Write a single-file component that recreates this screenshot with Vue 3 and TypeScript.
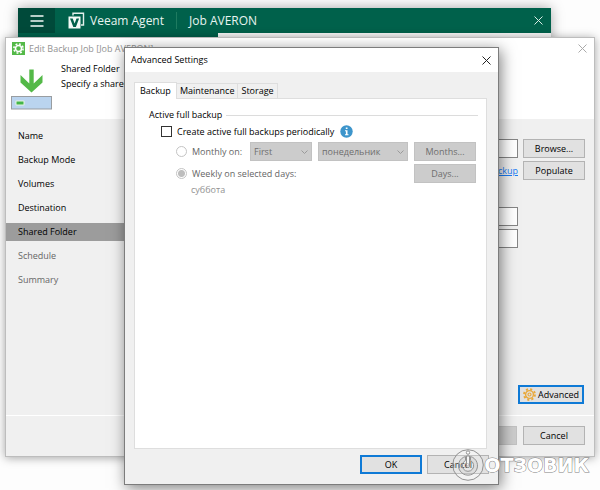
<script setup lang="ts">
import { ref } from 'vue'

interface Step {
  name: string
  pending?: boolean
}

const steps: Step[] = [
  { name: 'Name' },
  { name: 'Backup Mode' },
  { name: 'Volumes' },
  { name: 'Destination' },
  { name: 'Shared Folder' },
  { name: 'Schedule', pending: true },
  { name: 'Summary', pending: true },
]
const currentStep = ref('Shared Folder')

const tabs: string[] = ['Backup', 'Maintenance', 'Storage']
const activeTab = ref('Backup')

const periodic = ref(false)
const mode = ref<'monthly' | 'weekly'>('weekly')
</script>

<template>
  <div class="desktop">
    <section class="window agent" aria-label="Veeam Agent">
      <header class="agent-bar">
        <button class="menu" aria-label="Menu">
          <svg width="14" height="12" viewBox="0 0 14 12"><path d="M0.5 1h13M0.5 6h13M0.5 11h13" stroke="#f4faf8" stroke-width="1.4" /></svg>
        </button>
        <svg class="logo" width="17" height="17" viewBox="0 0 17 17">
          <path d="M5 3.5V1.200H15.500V13H13" fill="none" stroke="#e4f0ec" stroke-width="1.4" />
          <path d="M0.5 4.500H12.5V16.500H0.5z" fill="#f3faf7" />
          <path d="M2 6.600h2.700l1.900 5 1.900-5h2.600L7.900 15H5.300z" fill="#00614b" />
        </svg>
        <span class="brand">Veeam Agent</span>
        <span class="divider"></span>
        <span class="job">Job AVERON</span>
        <button class="close light" aria-label="Close">
          <svg width="9" height="9" viewBox="0 0 9 9"><path d="M0.5 0.5l8 8M8.5 0.5l-8 8" stroke="currentColor" /></svg>
        </button>
      </header>
      <div class="agent-body"></div>
    </section>

    <section class="window wizard" aria-label="Edit Backup Job">
      <header class="wizard-head">
        <div class="wizard-title">
          <svg width="13" height="13" viewBox="0 0 13 13">
            <rect width="13" height="13" fill="#54b948" />
            <circle cx="6.5" cy="6.5" r="4.6" fill="none" stroke="#fff" stroke-width="1.6" stroke-dasharray="1.9 1.71" />
            <circle cx="6.5" cy="6.5" r="3" fill="none" stroke="#fff" stroke-width="1.5" />
          </svg>
          <span>Edit Backup Job [Job AVERON]</span>
          <button class="close dim" aria-label="Close">
            <svg width="9" height="9" viewBox="0 0 9 9"><path d="M0.5 0.5l8 8M8.5 0.5l-8 8" stroke="currentColor" /></svg>
          </button>
        </div>
        <div class="intro">
          <svg width="41" height="41" viewBox="0 0 41 41">
            <path d="M18.300 0.500h4.400V14.500l8.800-8.500v7.500L20.500 23.500 9.500 13.500V6l8.800 8.500z" fill="#54b948" />
            <rect x="0.5" y="27.500" width="40" height="12.500" fill="#bad4ef" stroke="#999da1" />
            <rect x="4.500" y="31.500" width="9" height="5" rx="1" fill="#e8f5e4" />
            <rect x="5.500" y="32.500" width="7" height="3" fill="#43b649" />
          </svg>
          <div class="intro-text">
            <h1>Shared Folder</h1>
            <p>Specify a shared</p>
          </div>
        </div>
      </header>

      <div class="wizard-body">
        <nav class="steps">
          <a
            v-for="step in steps"
            :key="step.name"
            href="#"
            :class="{ current: step.name === currentStep, pending: step.pending }"
            @click.prevent="currentStep = step.name"
          >{{ step.name }}</a>
        </nav>
        <form class="folder" @submit.prevent>
          <div class="line">
            <input type="text" aria-label="Shared folder" />
            <button type="button" class="btn">Browse...</button>
          </div>
          <div class="line">
            <a class="link" href="#" @click.prevent>backup</a>
            <button type="button" class="btn">Populate</button>
          </div>
          <div class="credentials">
            <input type="text" aria-label="Username" />
            <input type="password" aria-label="Password" />
          </div>
          <button type="button" class="btn focus advanced">
            <svg width="13" height="13" viewBox="0 0 13 13" fill="none" stroke="#e9a93c">
              <circle cx="6.5" cy="6.5" r="5.400" stroke-width="2" stroke-dasharray="2.100 2.141" />
              <circle cx="6.5" cy="6.5" r="3.900" stroke-width="1.400" />
              <circle cx="6.5" cy="6.5" r="1.500" stroke-width="1.200" />
            </svg>
            Advanced
          </button>
        </form>
      </div>

      <footer class="wizard-foot">
        <button class="btn off" disabled aria-label="Finish"></button>
        <button class="btn">Cancel</button>
      </footer>
    </section>

    <section class="window dialog" role="dialog" aria-label="Advanced Settings">
      <header class="dialog-title">
        <span>Advanced Settings</span>
        <button class="close" aria-label="Close">
          <svg width="9" height="9" viewBox="0 0 9 9"><path d="M0.5 0.5l8 8M8.5 0.5l-8 8" stroke="currentColor" /></svg>
        </button>
      </header>

      <div class="tabs" role="tablist">
        <button
          v-for="tab in tabs"
          :key="tab"
          role="tab"
          :aria-selected="tab === activeTab"
          :class="{ active: tab === activeTab }"
          @click="activeTab = tab"
        >{{ tab }}</button>
      </div>

      <div class="panel" role="tabpanel">
        <h2>Active full backup</h2>
        <div class="option">
          <input id="periodic" v-model="periodic" type="checkbox" />
          <label for="periodic">Create active full backups periodically</label>
          <svg class="info" width="13" height="13" viewBox="0 0 13 13">
            <circle cx="6.500" cy="6.500" r="6.200" fill="#3d95cb" />
            <path d="M5 5.300h2.500v4h1v1H5v-1h.9v-3H5zM5.800 2.400h1.700v1.700H5.800z" fill="#fff" />
          </svg>
        </div>
        <div class="schedule">
          <div class="option">
            <input id="monthly" v-model="mode" type="radio" value="monthly" :disabled="!periodic" />
            <label for="monthly" class="muted">Monthly on:</label>
            <div class="picks">
              <div class="pick narrow">
                <select aria-label="Week" :disabled="!periodic"><option>First</option></select>
                <svg width="7" height="5" viewBox="0 0 7 5"><path d="M0.500 0.500l3 3 3-3" fill="none" stroke="#9a9a9a" /></svg>
              </div>
              <div class="pick">
                <select aria-label="Day" :disabled="!periodic"><option>понедельник</option></select>
                <svg width="7" height="5" viewBox="0 0 7 5"><path d="M0.500 0.500l3 3 3-3" fill="none" stroke="#9a9a9a" /></svg>
              </div>
              <button class="btn off" :disabled="!periodic">Months...</button>
            </div>
          </div>
          <div class="option">
            <input id="weekly" v-model="mode" type="radio" value="weekly" :disabled="!periodic" />
            <label for="weekly" class="muted">Weekly on selected days:</label>
            <button class="btn off end" :disabled="!periodic">Days...</button>
          </div>
          <p class="day">суббота</p>
        </div>
      </div>

      <footer class="dialog-foot">
        <button class="btn focus">OK</button>
        <button class="btn">Cancel</button>
      </footer>
    </section>

    <div class="watermark">
      <svg width="32" height="32" viewBox="0 0 32 32" fill="none" stroke="#929292">
        <circle cx="16" cy="16" r="15.300" fill="#fff" fill-opacity=".2" />
        <path d="M13.500 7.500a9.500 9.500 0 1 0 5 0v4a5.700 5.700 0 1 1-5 0z" fill="#aaa" fill-opacity=".15" />
        <path d="M14.500 7h3v10a1.500 1.500 0 0 1-3 0z" fill="#fff" fill-opacity=".6" />
        <circle cx="16" cy="3.600" r="1.700" fill="#fff" />
      </svg>
      <span>ОТЗОВИК</span>
    </div>
  </div>
</template>

<style>
body {
  margin: 0;
  background: #fdfdfd;
}
</style>

<style scoped>
* {
  box-sizing: border-box;
}
.desktop {
  position: relative;
  min-height: 100vh;
  overflow: hidden;
  font: 9px/14px "Open Sans", "Noto Sans", sans-serif;
  color: #000;
}
button,
input,
select {
  font: inherit;
  color: inherit;
  margin: 0;
  padding: 0;
  border-radius: 0;
}
button {
  border: 0;
  background: none;
}
h1,
h2,
p {
  margin: 0;
  font: inherit;
}
svg {
  display: block;
  flex: none;
}
.window {
  position: absolute;
  display: flex;
  flex-direction: column;
}

.agent {
  inset: 8px 49px 60px 18px;
  background: #00614b;
  box-shadow: 0 0 12px rgba(0, 0, 0, 0.35);
}
.agent-bar {
  display: flex;
  align-items: center;
  height: 25px;
  padding-right: 8px;
  color: #e8f4f0;
  font-size: 12px;
}
.menu {
  display: flex;
  align-items: center;
  justify-content: center;
  width: 37px;
  height: 25px;
  background: #004a3a;
}
.logo {
  margin: 0 5px 0 13px;
}
.divider {
  width: 1px;
  height: 17px;
  margin: 0 12px;
  background: #1f7b60;
}
.close {
  margin-left: auto;
  color: #222;
}
.close.light {
  color: #d9ebe5;
}
.close.dim {
  color: #aaa;
}
.agent-body {
  flex: 1;
  margin-left: 200px;
  background: #f5f5f5;
}

.wizard {
  inset: 37px 5px 33px;
  border: 1px solid #bdbdbd;
  background: #f0f0f0;
  box-shadow: 0 1px 9px rgba(0, 0, 0, 0.35);
}
.wizard-head {
  height: 81px;
  background: #fff;
}
.wizard-title {
  display: flex;
  align-items: center;
  gap: 4px;
  height: 21px;
  padding: 0 7px 0 6px;
  color: #929292;
}
.intro {
  display: flex;
  gap: 9px;
  padding: 10px 5px;
}
.intro-text {
  flex: 1;
  display: flex;
  flex-direction: column;
  gap: 1px;
  margin-top: -7px;
}
.wizard-body {
  flex: 1;
  display: flex;
  justify-content: space-between;
  border-bottom: 1px solid #fff;
}
.steps {
  display: flex;
  flex-direction: column;
  gap: 6px;
  width: 160px;
  padding-top: 8px;
}
.steps a {
  padding: 2px 12px;
  color: #000;
  text-decoration: none;
}
.steps .current {
  background: #9c9c9c;
}
.steps .pending {
  color: #666;
}
.folder {
  display: flex;
  flex-direction: column;
  gap: 3px;
  width: 160px;
  padding: 20px 9px 11px 0;
}
.line {
  display: flex;
  align-items: center;
  justify-content: flex-end;
  gap: 5px;
}
.folder input {
  flex: 1;
  min-width: 0;
  height: 19px;
  border: 1px solid #858585;
  background: #fff;
}
.link {
  color: #1a7cf5;
}
.credentials {
  display: flex;
  flex-direction: column;
  gap: 3px;
  height: 41px;
  margin: 24px 67px 0 0;
}
.btn {
  display: flex;
  align-items: center;
  justify-content: center;
  flex: none;
  width: 62px;
  height: 19px;
  border: 1px solid #b3b3b3;
  background: #e1e1e1;
}
.btn.focus {
  border: 2px solid #0f7ad6;
}
.btn.off {
  border-color: #c2c2c2;
  background: #ccc;
  color: #6e6e6e;
}
.advanced {
  align-self: flex-end;
  gap: 2px;
  width: 66px;
  margin: auto 1px 0 0;
}
.wizard-foot {
  display: flex;
  justify-content: flex-end;
  gap: 6px;
  height: 40px;
  padding: 10px 9px 0;
}

.dialog {
  inset: 47px 101px 5px 124px;
  border: 1px solid #7c7c7c;
  background: #f0f0f0;
  box-shadow: 2px 3px 14px rgba(0, 0, 0, 0.5);
}
.dialog-title {
  display: flex;
  align-items: center;
  height: 24px;
  padding: 0 7px 0 6px;
  background: #fff;
}
.tabs {
  display: flex;
  align-items: flex-end;
  height: 26px;
  padding-left: 9px;
}
.tabs button {
  height: 15px;
  padding: 0 3px;
  border: 1px solid #dedede;
  border-width: 1px 1px 0 0;
}
.tabs .active {
  z-index: 1;
  height: 17px;
  margin-bottom: -1px;
  padding: 0 5px 1px;
  border-left-width: 1px;
  background: #fff;
}
.panel {
  flex: 1;
  margin: 0 11px 0 9px;
  padding: 9px 8px 9px 14px;
  border: 1px solid #dedede;
  background: #fff;
}
h2 {
  display: flex;
  align-items: center;
  gap: 4px;
}
h2::after {
  content: "";
  flex: 1;
  height: 1px;
  background: #dcdcdc;
}
.option {
  display: flex;
  align-items: center;
  height: 19px;
}
.panel > .option {
  padding-left: 12px;
}
.option input {
  appearance: none;
  flex: none;
  width: 11px;
  height: 11px;
  margin-right: 5px;
  border: 1px solid #333;
  background: #fff;
}
.option input[type="radio"] {
  border-color: #c4c4c4;
  border-radius: 50%;
}
.option input[type="radio"]:checked {
  background: radial-gradient(#bdbdbd 0 3px, #fff 4px);
}
.info {
  margin-left: 6px;
}
.schedule {
  display: flex;
  flex-direction: column;
  gap: 3px;
  padding: 1px 2px 0 27px;
}
.muted {
  color: #666;
}
.picks {
  display: flex;
  gap: 6px;
  flex: 1;
  max-width: 226px;
  margin-left: auto;
}
.pick {
  position: relative;
  flex: 1;
}
.pick.narrow {
  flex: none;
  width: 62px;
}
.pick select {
  appearance: none;
  width: 100%;
  height: 19px;
  padding: 0 3px;
  border: 1px solid #c2c2c2;
  background: #ccc;
  color: #6e6e6e;
  opacity: 1;
}
.pick svg {
  position: absolute;
  top: 8px;
  right: 4px;
}
.end {
  margin-left: auto;
}
.day {
  margin: -3px 0 0 15px;
  color: #929292;
}
.dialog-foot {
  display: flex;
  justify-content: flex-end;
  gap: 5px;
  height: 35px;
  padding: 6px 9px 0;
}

.watermark {
  position: absolute;
  right: 11px;
  bottom: 9px;
  display: flex;
  align-items: center;
  pointer-events: none;
}
.watermark span {
  font: bold 19px/24px "DejaVu Sans", sans-serif;
  color: #fff;
  -webkit-text-stroke: 1px #808080;
  paint-order: stroke fill;
}
</style>
